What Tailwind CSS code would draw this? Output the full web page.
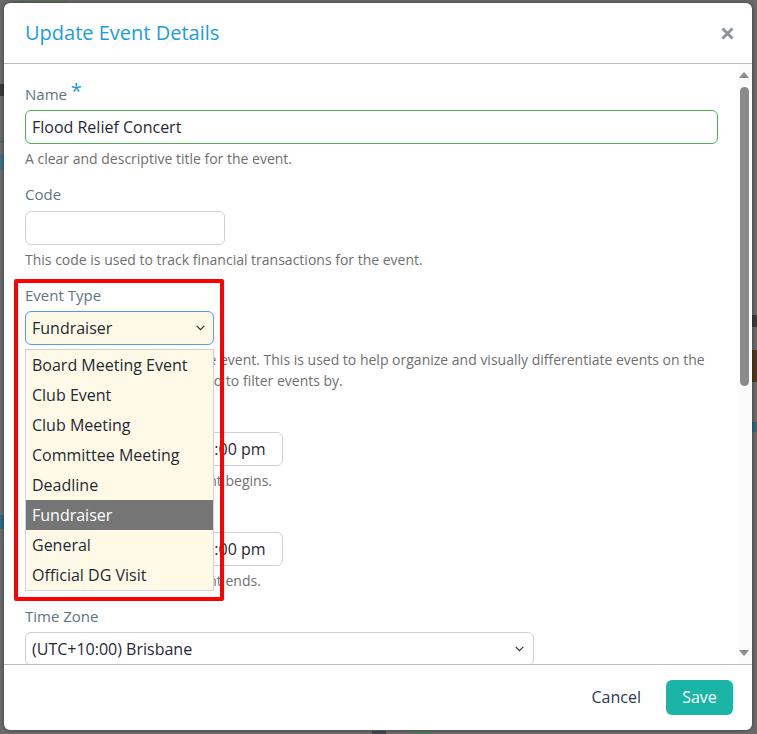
<!DOCTYPE html>
<html lang="en">

<head>
    <meta charset="UTF-8">
    <title>Update Event Details</title>
    <script src="https://cdn.jsdelivr.net/npm/@tailwindcss/browser@4"></script>
</head>

<body class="relative bg-[#6b6b6b] h-[734px] overflow-hidden font-['Open_Sans',sans-serif]">
    <!-- bits of the page behind the backdrop -->
    <div class="absolute left-[20px] top-0 w-[46px] h-[3px] bg-[#5f6e60]"></div>
    <div class="absolute left-0 top-[84px] w-[4px] h-[12px] bg-[#3a3a3a]"></div>
    <div class="absolute left-0 top-[141px] w-[4px] h-px bg-[#1f5f80]"></div>
    <div class="absolute left-0 top-[155px] w-[4px] h-[14px] bg-[#3f6f8a]"></div>
    <div class="absolute left-0 top-[515px] w-[4px] h-[14px] bg-[#2f6a8a]"></div>
    <div class="absolute left-[752px] top-[315px] w-[5px] h-[12px] bg-[#3a3a3a]"></div>
    <div class="absolute left-[752px] top-[350px] w-[5px] h-[32px] bg-[#4a3a20]"></div>
    <div class="absolute left-[752px] top-[422px] w-[5px] h-[10px] bg-[#2f6a7a]"></div>
    <div class="absolute left-[372px] top-[731px] w-[14px] h-[3px] bg-[#3f4a55]"></div>
    <div class="absolute left-[408px] top-[731px] w-[24px] h-[3px] bg-[#5a7560]"></div>

    <div class="relative mt-[3px] ml-[4px] w-[748px] h-[727px] bg-white rounded-[6px] flex flex-col overflow-hidden shadow-[0_0_4px_rgba(0,0,0,0.45)]">
        <!-- header -->
        <div class="h-[61px] shrink-0 border-b border-[#bdbdbd] flex items-center justify-between pl-[21px] pr-[18px]">
            <h4 class="text-[20px] text-[#1b9ce2]">Update Event Details</h4>
            <svg class="w-[13px] h-[13px]" viewBox="0 0 13 13" fill="none" stroke="#8c959c" stroke-width="3">
                <path d="M1.5 1.5l10 10M11.5 1.5l-10 10" />
            </svg>
        </div>

        <!-- body -->
        <div class="relative h-[600px] shrink-0 overflow-hidden pl-[21px] pr-[34px] pt-[20px]">
            <div class="h-[101px]">
                <label class="block text-[15px] leading-[21px] text-[#5f7480]">Name <span class="text-[#1b9ce2] text-[20px] leading-[10px] relative -top-[2px]">*</span></label>
                <div class="mt-[5px] h-[34px] w-[693px] border border-[#4caf50] rounded-[6px] pl-[6px] text-[16px] leading-[32px] text-[#1f2933]">Flood Relief Concert</div>
                <p class="mt-[4px] text-[14px] leading-[21px] text-[#6f6f6f]">A clear and descriptive title for the event.</p>
            </div>
            <div class="h-[100px]">
                <label class="block text-[15px] leading-[19px] pb-[2px] text-[#5f7480]">Code</label>
                <div class="mt-[5px] h-[34px] w-[200px] border border-[#cfcfcf] rounded-[6px]"></div>
                <p class="mt-[4px] text-[14px] leading-[21px] text-[#6f6f6f]">This code is used to track financial transactions for the event.</p>
            </div>
            <div class="h-[121px]">
                <label class="block text-[15px] leading-[21px] text-[#5f7480]">Event Type</label>
                <div class="mt-[5px] h-[34px]"></div>
                <p class="mt-[4px] text-[14px] leading-[21px] text-[#6f6f6f]">Nominate the category of the event. This is used to help organize and visually differentiate events on the calendar and can also be used to filter events by.</p>
            </div>
            <div class="h-[100px]">
                <label class="block text-[15px] leading-[21px] text-[#5f7480]">Start</label>
                <div class="mt-[5px] flex gap-[8px]">
                    <div class="h-[34px] w-[150px] border border-[#cfcfcf] rounded-[6px]"></div>
                    <div class="h-[34px] w-[100px] border border-[#cfcfcf] rounded-[6px] pl-[12px] text-[16px] leading-[32px] text-[#1f2933]">12:00 pm</div>
                </div>
                <p class="mt-[4px] text-[14px] leading-[21px] text-[#6f6f6f]">Date and time when the event begins.</p>
            </div>
            <div class="h-[100px]">
                <label class="block text-[15px] leading-[21px] text-[#5f7480]">End</label>
                <div class="mt-[5px] flex gap-[8px]">
                    <div class="h-[34px] w-[150px] border border-[#cfcfcf] rounded-[6px]"></div>
                    <div class="h-[34px] w-[100px] border border-[#cfcfcf] rounded-[6px] pl-[12px] text-[16px] leading-[32px] text-[#1f2933]">12:00 pm</div>
                </div>
                <p class="mt-[4px] text-[14px] leading-[21px] text-[#6f6f6f]">Date and time when the event ends.</p>
            </div>
            <div>
                <label class="block text-[15px] leading-[21px] text-[#5f7480]">Time Zone</label>
                <div class="mt-[5px] h-[34px] w-[509px] border border-[#cfcfcf] rounded-[6px] pl-[6px] pr-[9px] text-[16px] leading-[32px] text-[#1f2933] flex items-center justify-between">
                    <span>(UTC+10:00) Brisbane</span>
                    <svg class="w-[9px] h-[6px]" viewBox="0 0 9 6" fill="none" stroke="#333" stroke-width="1.2"><path d="M.7.8l3.8 3.8L8.3.8" /></svg>
                </div>
            </div>

            <!-- scrollbar -->
            <div class="absolute top-0 right-0 bottom-0 w-[14px] bg-[#fbfbfb] flex flex-col items-center">
                <svg class="mt-[8px] w-[10px] h-[6px] -ml-[2px]" viewBox="0 0 10 6" fill="#8a8a8a"><path d="M5 0l5 6H0z" /></svg>
                <div class="mt-[9px] -ml-[2px] w-[9px] h-[299px] rounded-[5px] bg-[#8a8a8a]"></div>
                <svg class="mt-auto mb-[8px] w-[10px] h-[6px] -ml-[2px]" viewBox="0 0 10 6" fill="#8a8a8a"><path d="M0 0h10L5 6z" /></svg>
            </div>
        </div>

        <!-- footer -->
        <div class="flex-1 border-t border-[#bdbdbd] flex items-center justify-end pr-[19px] gap-[25px]">
            <span class="text-[16px] text-[#2b3a4a] pb-[2px]">Cancel</span>
            <span class="w-[67px] h-[35px] rounded-[6px] bg-[#1ab5a6] text-white text-[16px] pb-[2px] flex items-center justify-center">Save</span>
        </div>

        <!-- open select, lies over the form -->
        <div class="absolute left-[21px] top-[308px] w-[189px] h-[34px] bg-[#fff9e8] border border-[#5b9ae8] rounded-[6px] pl-[6px] pr-[8px] text-[16px] leading-[32px] text-[#1f2933] flex items-center justify-between">
            <span>Fundraiser</span>
            <svg class="w-[9px] h-[6px]" viewBox="0 0 9 6" fill="none" stroke="#333" stroke-width="1.2"><path d="M.7.8l3.8 3.8L8.3.8" /></svg>
        </div>
        <ul class="absolute left-[21px] top-[346px] w-[189px] h-[242px] bg-[#fff9e8] border border-[#d3d3d3] text-[16px] leading-[30px] text-[#1f2933]">
            <li class="pl-[6px]">Board Meeting Event</li>
            <li class="pl-[6px]">Club Event</li>
            <li class="pl-[6px]">Club Meeting</li>
            <li class="pl-[6px]">Committee Meeting</li>
            <li class="pl-[6px]">Deadline</li>
            <li class="pl-[6px] bg-[#757575] text-white">Fundraiser</li>
            <li class="pl-[6px]">General</li>
            <li class="pl-[6px]">Official DG Visit</li>
        </ul>

        <!-- red annotation box -->
        <div class="absolute left-[10px] top-[276px] w-[210px] h-[322px] border-[4px] border-[#ff0000] rounded-[2px]"></div>
    </div>
</body>

</html>
